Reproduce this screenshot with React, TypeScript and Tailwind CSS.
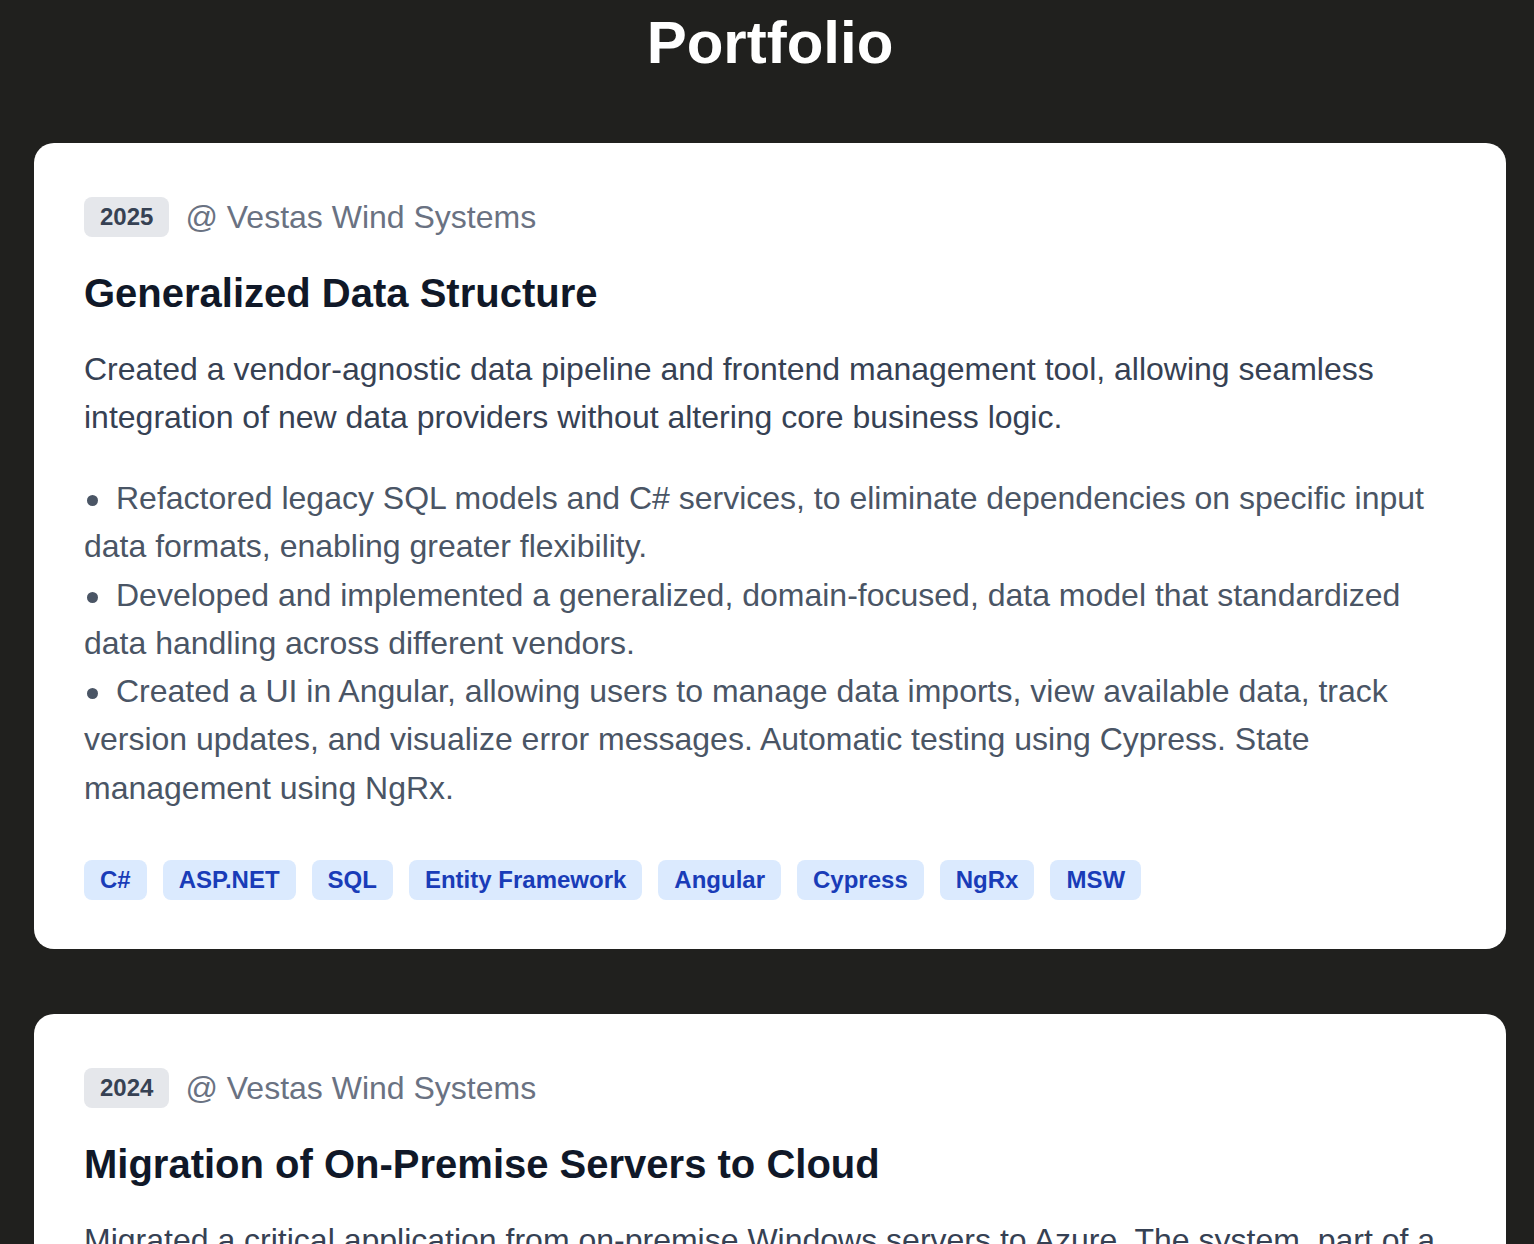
type Project = {
  year: string;
  company: string;
  title: string;
  summary: string;
  bullets: string[];
  tags: string[];
};

const projects: Project[] = [
  {
    year: '2025',
    company: 'Vestas Wind Systems',
    title: 'Generalized Data Structure',
    summary:
      'Created a vendor-agnostic data pipeline and frontend management tool, allowing seamless integration of new data providers without altering core business logic.',
    bullets: [
      'Refactored legacy SQL models and C# services, to eliminate dependencies on specific input data formats, enabling greater flexibility.',
      'Developed and implemented a generalized, domain-focused, data model that standardized data handling across different vendors.',
      'Created a UI in Angular, allowing users to manage data imports, view available data, track version updates, and visualize error messages. Automatic testing using Cypress. State management using NgRx.',
    ],
    tags: ['C#', 'ASP.NET', 'SQL', 'Entity Framework', 'Angular', 'Cypress', 'NgRx', 'MSW'],
  },
  {
    year: '2024',
    company: 'Vestas Wind Systems',
    title: 'Migration of On-Premise Servers to Cloud',
    summary:
      'Migrated a critical application from on-premise Windows servers to Azure. The system, part of a larger data platform, now runs on managed cloud services with automated deployments.',
    bullets: [
      'Moved scheduled jobs and services to Azure Functions and App Services, reducing maintenance overhead.',
      'Set up infrastructure as code and CI/CD pipelines for repeatable, reliable releases.',
    ],
    tags: ['Azure', 'C#', 'SQL', 'Terraform', 'Azure DevOps'],
  },
];

function ProjectCard({ project }: { project: Project }) {
  return (
    <section className="bg-white rounded-[20px] px-[50px] pt-[50px] pb-[49px]">
      <div className="flex items-center gap-4 h-[48px]">
        <span className="bg-gray-200 text-gray-700 font-bold text-[24px] leading-[32px] px-4 py-1 rounded-lg">
          {project.year}
        </span>
        <span className="text-gray-500 text-[32px] leading-[48px]">@ {project.company}</span>
      </div>

      <h2 className="mt-[28px] text-[40px] leading-[48px] font-bold text-gray-900">{project.title}</h2>

      <p className="mt-7 text-[32px] leading-[48px] text-gray-700">{project.summary}</p>

      <ul className="mt-[33px] text-[32px] leading-[48.3px] text-gray-600">
        {project.bullets.map((b) => (
          <li key={b}>
            <span className="inline-block align-middle w-[11px] h-[11px] rounded-full bg-gray-600 ml-[3px] mr-[18px]" />
            {b}
          </li>
        ))}
      </ul>

      <div className="mt-[48px] flex flex-wrap gap-4">
        {project.tags.map((t) => (
          <span
            key={t}
            className="bg-blue-100 text-blue-800 font-bold text-[24px] leading-[32px] px-4 py-1 rounded-lg"
          >
            {t}
          </span>
        ))}
      </div>
    </section>
  );
}

export default function App() {
  return (
    <div className="bg-[#20201e] min-h-screen pl-[34px] pr-[28px] pt-[7px] pb-16 font-['Liberation_Sans',Arial,sans-serif]">
      <h1 className="text-white text-center font-bold text-[60px] leading-[72px]">Portfolio</h1>
      <div className="mt-[64px] flex flex-col gap-[65px]">
        {projects.map((p) => (
          <ProjectCard key={p.title} project={p} />
        ))}
      </div>
    </div>
  );
}
